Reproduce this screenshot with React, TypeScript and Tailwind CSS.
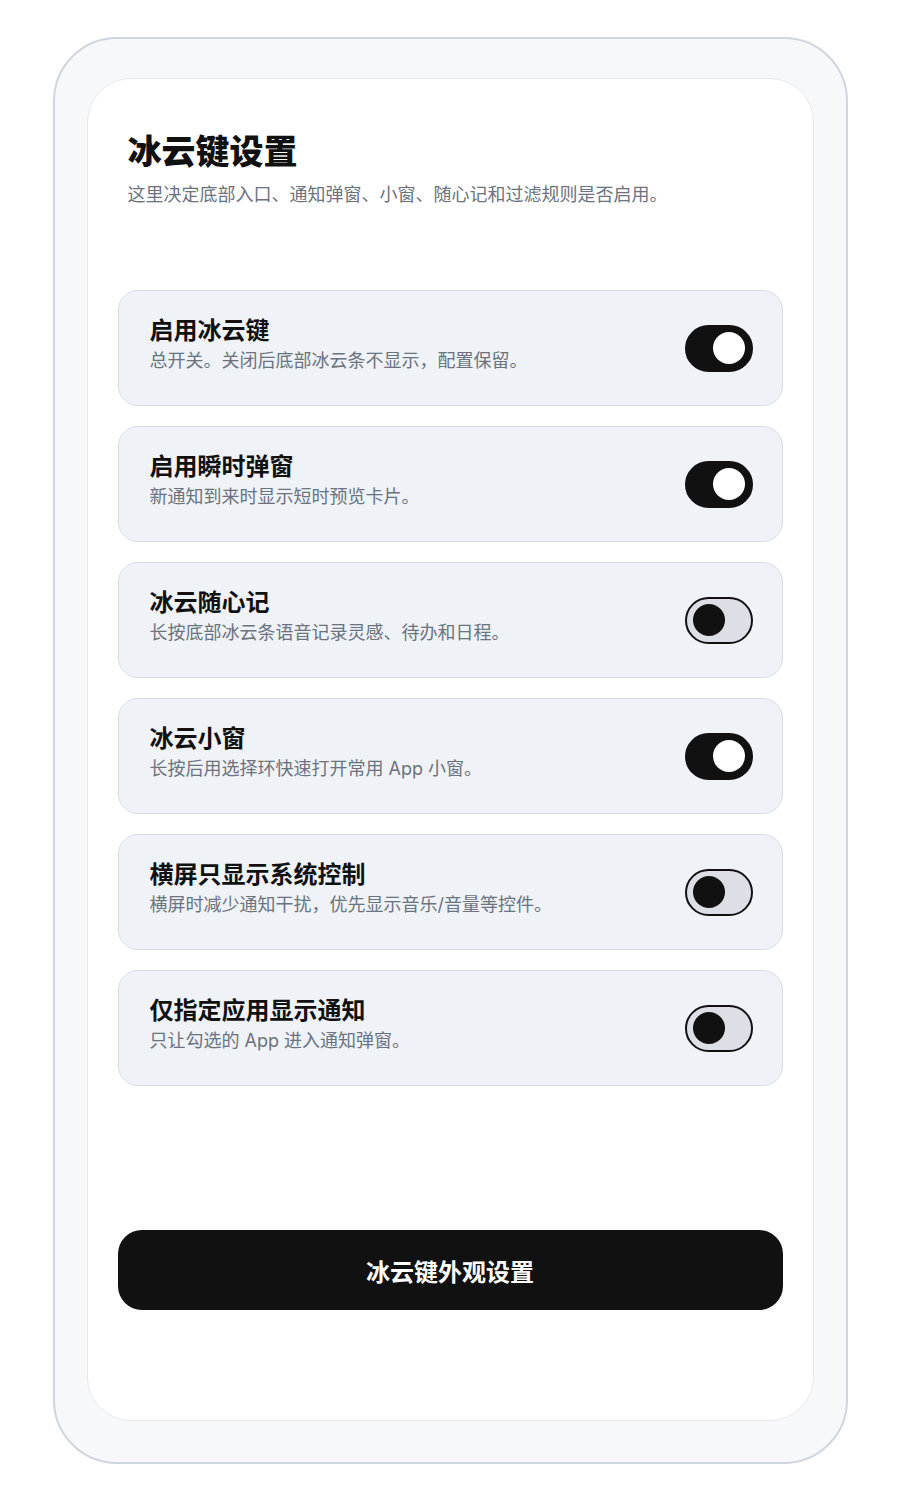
import React, { useState } from 'react';

interface SettingItem {
  title: string;
  desc: string;
  on: boolean;
}

const initialItems: SettingItem[] = [
  { title: '启用冰云键', desc: '总开关。关闭后底部冰云条不显示，配置保留。', on: true },
  { title: '启用瞬时弹窗', desc: '新通知到来时显示短时预览卡片。', on: true },
  { title: '冰云随心记', desc: '长按底部冰云条语音记录灵感、待办和日程。', on: false },
  { title: '冰云小窗', desc: '长按后用选择环快速打开常用 App 小窗。', on: true },
  { title: '横屏只显示系统控制', desc: '横屏时减少通知干扰，优先显示音乐/音量等控件。', on: false },
  { title: '仅指定应用显示通知', desc: '只让勾选的 App 进入通知弹窗。', on: false },
];

const Toggle: React.FC<{ on: boolean; onClick: () => void }> = ({ on, onClick }) => {
  return (
    <button
      onClick={onClick}
      className={`flex h-[47px] w-[68px] shrink-0 items-center rounded-full border-2 border-[#111111] px-[6px] ${
        on ? 'justify-end bg-[#111111]' : 'justify-start bg-[#dcdfe5]'
      }`}
    >
      <span className={`block h-[32px] w-[32px] rounded-full ${on ? 'bg-white' : 'bg-[#111111]'}`} />
    </button>
  );
};

const App: React.FC = () => {
  const [items, setItems] = useState(initialItems);

  const toggle = (i: number) => {
    setItems((prev) => prev.map((it, idx) => (idx === i ? { ...it, on: !it.on } : it)));
  };

  return (
    <div
      className="flex min-h-screen justify-center bg-white pt-[37px] pb-[36px]"
      style={{ fontFamily: '"Inter", "Noto Sans CJK SC", sans-serif' }}
    >
      <div className="h-[1427px] w-[795px] rounded-[64px] border-2 border-[#cfd6e0] bg-[#f7f8fa] px-[32px] pt-[39px] pb-[41px]">
        <div className="flex h-full flex-col rounded-[44px] border border-[#e6e9ee] bg-white px-[30px] pt-[51px]">
          <h1 className="pl-[10px] text-[34px] font-extrabold leading-[44px] text-[#111111]">冰云键设置</h1>
          <p className="mt-[8px] pl-[10px] text-[18px] leading-[26px] text-[#6b7280]">
            这里决定底部入口、通知弹窗、小窗、随心记和过滤规则是否启用。
          </p>

          <div className="mt-[82px] flex flex-col gap-5">
            {items.map((item, i) => (
              <div
                key={item.title}
                className="flex h-[116px] items-center justify-between rounded-[20px] border border-[#d6dce6] bg-[#eff2f7] pl-[31px] pr-[29px]"
              >
                <div className="mb-[6px] flex flex-col">
                  <span className="text-[24px] font-bold leading-[30px] text-[#111111]">{item.title}</span>
                  <span className="mt-[2px] text-[18px] leading-[26px] text-[#6b7280]">{item.desc}</span>
                </div>
                <Toggle on={item.on} onClick={() => toggle(i)} />
              </div>
            ))}
          </div>

          <button className="mt-[144px] flex h-[80px] w-full items-center justify-center rounded-[24px] bg-[#111111] pt-[5px] text-[24px] font-bold text-white">
            冰云键外观设置
          </button>
        </div>
      </div>
    </div>
  );
};

export default App;
